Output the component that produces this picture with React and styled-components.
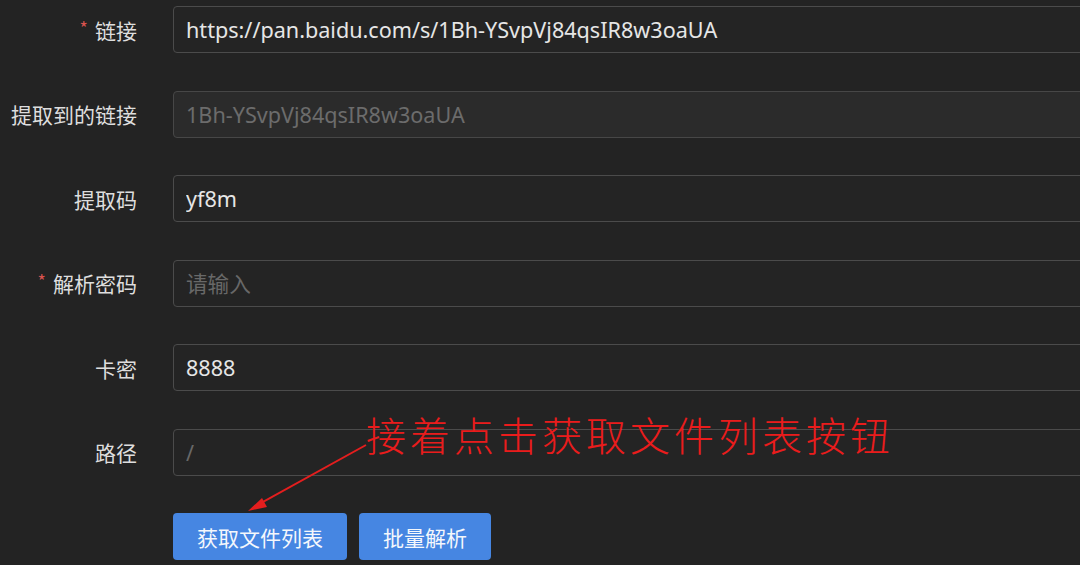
import React from 'react';
import styled, { createGlobalStyle } from 'styled-components';

const GlobalStyle = createGlobalStyle`
  html, body {
    margin: 0;
    padding: 0;
    background: #232323;
    overflow: hidden;
  }
  body {
    font-family: "Noto Sans", "Noto Sans CJK SC", sans-serif;
  }
`;

const Page = styled.div`
  position: relative;
  width: 1080px;
  height: 565px;
  background: #232323;
  overflow: hidden;
`;

const Form = styled.form`
  display: grid;
  grid-template-columns: 137px 960px;
  column-gap: 36px;
  row-gap: 37.5px;
  padding-top: 6px;
  align-items: center;
`;

const Label = styled.label`
  display: flex;
  justify-content: flex-end;
  align-items: center;
  gap: 7px;
  color: #dedede;
  font-size: 21px;
  font-family: "Noto Sans CJK SC", sans-serif;
  white-space: nowrap;
`;

const Star = styled.span`
  color: #d9534f;
  font-size: 18px;
  line-height: 1;
  margin-top: -6px;
`;

const Input = styled.input`
  box-sizing: border-box;
  width: 100%;
  height: 47px;
  padding: 0 12px;
  border: 1px solid ${p => (p.disabled ? '#474747' : '#4b4b4b')};
  border-radius: 4px;
  background: ${p => (p.disabled ? '#2b2b2b' : '#242424')};
  color: ${p => (p.disabled ? '#6c6c6c' : '#e6e6e6')};
  font-size: 21.6px;
  font-family: "Noto Sans", "Noto Sans CJK SC", sans-serif;
  outline: none;
  &::placeholder {
    color: #686868;
  }
`;

const Buttons = styled.div`
  display: flex;
  gap: 12px;
`;

const Button = styled.button`
  height: 47px;
  padding: 0 24px;
  border: none;
  border-radius: 4px;
  background: #4686e2;
  color: #f4f7fc;
  font-size: 21px;
  font-family: "Noto Sans CJK SC", sans-serif;
  cursor: pointer;
`;

const Note = styled.div`
  position: absolute;
  left: 366px;
  top: 405px;
  color: #ea1c1c;
  font-size: 40px;
  font-weight: 300;
  letter-spacing: 4px;
  font-family: "Noto Sans CJK SC", sans-serif;
  white-space: nowrap;
`;

const Arrow = styled.svg`
  position: absolute;
  left: 240px;
  top: 440px;
`;

const fields = [
  { label: '链接', required: true, value: 'https://pan.baidu.com/s/1Bh-YSvpVj84qsIR8w3oaUA' },
  { label: '提取到的链接', value: '1Bh-YSvpVj84qsIR8w3oaUA', disabled: true },
  { label: '提取码', value: 'yf8m' },
  { label: '解析密码', required: true, placeholder: '请输入' },
  { label: '卡密', value: '8888' },
  { label: '路径', placeholder: '/' },
];

export default function App() {
  return (
    <Page>
      <GlobalStyle />
      <Form onSubmit={e => e.preventDefault()}>
        {fields.map(f => (
          <React.Fragment key={f.label}>
            <Label>
              {f.required && <Star>*</Star>}
              {f.label}
            </Label>
            <Input
              defaultValue={f.value}
              placeholder={f.placeholder}
              disabled={f.disabled}
            />
          </React.Fragment>
        ))}
        <span />
        <Buttons>
          <Button type="button">获取文件列表</Button>
          <Button type="button">批量解析</Button>
        </Buttons>
      </Form>
      <Note>接着点击获取文件列表按钮</Note>
      <Arrow width="140" height="80" viewBox="0 0 140 80">
        <line x1="126" y1="5" x2="14" y2="67" stroke="#e41e1e" strokeWidth="2" />
        <polygon points="8,71 22,58 27,67" fill="#e41e1e" />
      </Arrow>
    </Page>
  );
}
